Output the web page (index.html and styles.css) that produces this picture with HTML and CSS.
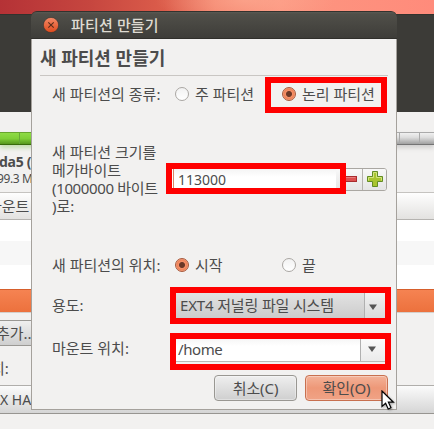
FILE: index.html
```html
<!DOCTYPE html>
<html lang="ko">
<head>
<meta charset="utf-8">
<title>파티션 만들기</title>
<link rel="stylesheet" href="styles.css">
</head>
<body>
<div class="desktop">
  <div class="wallpaper"></div>
  <div class="installer-head"></div>
  <div class="installer">
    <div class="disk-bar"><div class="disk-used"></div><div class="disk-free"></div></div>
    <div class="disk-name"><b>da5 (</b></div>
    <div class="disk-size">99.3 M</div>
    <div class="table-head"><span>마운트</span></div>
    <div class="table-row first"></div>
    <div class="table-row alt"></div>
    <div class="table-row"></div>
    <div class="table-row selected"></div>
    <div class="add-button"><span>추가..</span></div>
    <div class="device-label"><span>치:</span></div>
    <div class="device-combo">X HA</div>
  </div>
</div>

<div class="dialog">
  <div class="titlebar">
    <svg class="close" viewBox="0 0 16 16" width="16" height="16">
      <defs><linearGradient id="closeFill" x1="0" y1="0" x2="0" y2="1"><stop offset="0" stop-color="#f58a68"/><stop offset="1" stop-color="#df4a1c"/></linearGradient></defs>
      <circle cx="8" cy="8" r="7.6" fill="url(#closeFill)" stroke="#353430" stroke-width=".6"/>
      <path d="M5.3 5.3l5.4 5.4M10.7 5.3l-5.4 5.4" stroke="#5a2c1b" stroke-width="1.1"/>
    </svg>
    <span class="title">파티션 만들기</span>
  </div>
  <div class="content">
    <h1><span>새 파티션 만들기</span></h1>
    <div class="row row-type">
      <label>새 파티션의 종류:</label>
      <div class="radios">
        <span class="option"><i class="radio"></i><span>주 파티션</span></span>
        <span class="option"><i class="radio on"></i><span>논리 파티션</span></span>
      </div>
      <div class="mark mark-type"></div>
    </div>
    <div class="row row-size">
      <label>새 파티션 크기를<br>메가바이트<br><span class="tight">(1000000 바이트</span><br>)로:</label>
      <div class="spin">
        <div class="spin-value">113000</div>
        <div class="spin-button minus">
          <svg width="16" height="6" viewBox="0 0 16 6"><rect x=".5" y=".5" width="15" height="5" fill="#dc4f4f" stroke="#a82b2e"/><path d="M1.5 1.5h13" stroke="#e87d7b"/></svg>
        </div>
        <div class="spin-button plus">
          <svg width="16" height="16" viewBox="0 0 16 16"><path d="M5.5 .5h5v5h5v5h-5v5h-5v-5h-5v-5h5z" fill="#a9c52f" stroke="#638c25"/><path d="M1.5 9.5v-3h5v-5h3v5h5v3" fill="none" stroke="#d3e57e"/></svg>
        </div>
      </div>
      <div class="mark mark-size"></div>
    </div>
    <div class="row row-place">
      <label>새 파티션의 위치:</label>
      <div class="radios">
        <span class="option"><i class="radio on"></i><span>시작</span></span>
        <span class="option"><i class="radio"></i><span>끝</span></span>
      </div>
    </div>
    <div class="row row-use">
      <label>용도:</label>
      <div class="combo">
        <span class="combo-value">EXT4 저널링 파일 시스템</span>
        <span class="combo-arrow"><svg width="8" height="6" viewBox="0 0 8 6"><path d="M0 .5h8L4 6z" fill="#555"/></svg></span>
      </div>
      <div class="mark mark-use"></div>
    </div>
    <div class="row row-mount">
      <label>마운트 위치:</label>
      <div class="entry">
        <span class="entry-value">/home</span>
        <span class="entry-arrow"><svg width="8" height="6" viewBox="0 0 8 6"><path d="M0 .5h8L4 6z" fill="#555"/></svg></span>
      </div>
      <div class="mark mark-mount"></div>
    </div>
    <div class="actions">
      <button type="button">취소(C)</button>
      <button type="button" class="default">확인(O)</button>
    </div>
  </div>
</div>
<svg class="cursor" width="15" height="21" viewBox="0 0 15 21">
  <path d="M1 1v15.5l3.6-3.3 2.6 5.8 2.8-1.3-2.6-5.5h5z" fill="#fff" stroke="#000" stroke-width="1.2"/>
</svg>
</body>
</html>
```
FILE: styles.css
```css
* { box-sizing: border-box; }
body {
  margin: 0;
  width: 434px;
  height: 429px;
  position: relative;
  overflow: hidden;
  background: #f2f1f0;
  color: #4c4c4c;
  font: 15px/18px "Noto Sans", "Noto Sans CJK KR", sans-serif;
  white-space: nowrap;
}
.desktop { display: flex; flex-direction: column; height: 429px; }
.wallpaper {
  height: 14px;
  background: radial-gradient(ellipse 90px 24px at 245px 0, rgba(255,180,155,.5), transparent),
    linear-gradient(90deg, #b53236 0, #c6463f 90px, #dc5d4b 165px, #f3846d 215px, #fc9680 280px, #ff8b7b 434px);
}
.installer-head { height: 98px; background: #3c3b37; border-top: 1px solid #33322e; }
.installer { flex: 1; display: flex; flex-direction: column; padding-top: 20px; }
.disk-bar { display: flex; height: 20px; flex: none; }
.disk-used, .disk-free { height: 13px; }
.disk-used {
  width: 200px;
  border-top: 1px solid #67a52d;
  border-bottom: 1px solid #386b0b;
  background: linear-gradient(90deg, transparent 19px, #67a837 19px, #67a837 20px, transparent 20px), linear-gradient(#8edb45 0, #7fcf37 50%, #56971e);
  box-shadow: 0 3px 4px rgba(125,190,80,.4);
}
.disk-free {
  flex: 1;
  border-top: 1px solid #aaa;
  border-bottom: 1px solid #747474;
  background: linear-gradient(90deg, transparent 199px, #aaa 199px, #aaa 200px, transparent 200px, transparent 219px, #aaa 219px, #aaa 220px, transparent 220px), linear-gradient(#f0f0f0 0, #ddd 40%, #a0a0a0);
  box-shadow: 0 3px 4px rgba(130,130,130,.3);
}
.disk-name { height: 19px; line-height: 19px; font-size: 14px; margin-left: -1px; letter-spacing: -.3px; }
.disk-size { height: 21px; line-height: 15px; font-size: 12px; margin-left: -3px; letter-spacing: -.4px; }
.table-head {
  height: 28px;
  line-height: 26px;
  border-top: 1px solid #c5c3c0;
  border-bottom: 1px solid #b5b3b0;
  background: linear-gradient(#fefefe, #e3e2e0);
}
.table-head span { margin-left: -12px; }
.table-row { height: 24px; background: #fff; }
.table-row.first { height: 21px; }
.table-row.alt { background: #f7f7f7; }
.table-row.selected { background: linear-gradient(#f58352, #ec713d); border-top: 1px solid #d65f2c; border-bottom: 1px solid #d4cfcb; }
.add-button {
  width: 80px;
  height: 26px;
  margin-top: 7px;
  line-height: 24px;
  border: 1px solid #9a9894;
  border-left: 0;
  background: linear-gradient(#efefef, #cfcfcf);
}
.add-button span { margin-left: -4px; }
.device-label { height: 39px; line-height: 44px; }
.device-label span { margin-left: -9px; }
.device-combo {
  height: 29px;
  line-height: 27px;
  font-size: 14px;
  border-top: 1px solid #b0aeab;
  border-bottom: 1px solid #979591;
  background: linear-gradient(#fbfbfb, #d5d5d5);
}
.table-row, .table-head, .disk-name, .disk-size, .add-button, .device-label, .device-combo { flex: none; }

.dialog {
  position: absolute;
  left: 31px;
  top: 11px;
  width: 366px;
  height: 399px;
  display: flex;
  flex-direction: column;
}
.titlebar {
  height: 28px;
  display: flex;
  align-items: center;
  padding-left: 12px;
  border-radius: 6px 6px 0 0;
  border-top: 1px solid #33322e;
  border-bottom: 1px solid #302f2b;
  background: linear-gradient(#5a5953 0, #504f49 2px, #3e3d39 100%);
  color: #dfdbd2;
}
.title { margin-left: 12px; font-weight: 500; letter-spacing: .15px; }
.content {
  flex: 1;
  padding: 0 8px;
  background: #f2f1f0;
  border: 1px solid #a5a19c;
  border-top: 0;
}
h1 { margin: 0; height: 37px; line-height: 38px; font-size: 18px; font-weight: 700; border-bottom: 1px solid #c9c6c3; }
.row { position: relative; display: flex; align-items: center; padding-left: 12px; }
.row label { width: 123px; flex: none; }
.tight { letter-spacing: -.35px; }
.row-type { height: 36px; }
.row-size { height: 134px; }
.row-size label { margin-top: -1px; }
.row-place { height: 38px; }
.row-use { height: 44px; }
.row-use label { margin-top: -2px; }
.row-mount { height: 43px; }
.row-mount label { margin-top: -3px; }
.radios { display: grid; grid-template-columns: 107px 100px; }
.option { display: flex; align-items: center; gap: 6px; }
.radio {
  width: 14px;
  height: 14px;
  border: 1px solid #aaa7a3;
  border-radius: 50%;
  background: linear-gradient(#f2f2f2, #fff);
}
.radio.on { border-color: #a7583a; background: radial-gradient(circle, #6b3726 0 2.5px, #f49069 3.5px, #f08256 5px, #f5a587 6px); }
.mark { position: absolute; border: 6px solid #f00; }
.mark-type { left: 225px; top: 1px; width: 122px; height: 36px; }
.mark-size { left: 126px; top: 51px; width: 180px; height: 31px; }
.mark-use { left: 130px; top: 3px; width: 221px; height: 37px; }
.mark-mount { left: 130px; top: 5px; width: 221px; height: 37px; }
.spin {
  display: flex;
  width: 219px;
  height: 23px;
  margin-left: -7px;
  border: 1px solid #aaa7a2;
  border-radius: 3px;
  background: #fff;
}
.spin-value {
  flex: 1;
  margin-left: 4px;
  padding-left: 4px;
  line-height: 22px;
  border-left: 1px solid #d98567;
  font-size: 14px;
  background: linear-gradient(#f4f4f4, #fff 8px);
}
.spin-button { display: flex; align-items: center; justify-content: center; background: linear-gradient(#f8f8f8, #e5e5e5); }
.minus { width: 26px; padding-right: 1px; }
.minus svg { flex: none; }
.plus { width: 24px; border-left: 1px solid #b5b2ae; border-radius: 0 2px 2px 0; }
.combo, .entry { display: flex; width: 213px; height: 27px; }
.combo { background: linear-gradient(#e2e2e2, #cacaca); }
.combo-value { width: 189px; padding-left: 5px; line-height: 24px; letter-spacing: -.15px; }
.combo-arrow { flex: 1; display: flex; align-items: center; padding: 1px 0 0 4px; border-left: 1px solid #b0b0b0; background: linear-gradient(#f1f1f1, #d8d8d8); }
.entry { background: linear-gradient(#f4f4f4, #fff 8px); border-bottom: 1px solid #bcb9b6; height: 24px; }
.entry-value { width: 185px; padding-left: 3px; line-height: 22px; letter-spacing: -.4px; }
.entry-arrow { flex: 1; display: flex; align-items: center; padding-left: 7px; border-left: 1px solid #b0b0b0; background: linear-gradient(#fafafa, #ebebeb); }
.actions { display: flex; justify-content: flex-end; gap: 8px; padding-top: 4px; }
button {
  width: 83px;
  height: 26px;
  padding: 0 0 1px;
  border: 1px solid #999792;
  border-radius: 4px;
  background: linear-gradient(#efefef, #cfcfcf);
  box-shadow: inset 0 0 0 1px rgba(255,255,255,.35);
  color: #4c4c4c;
  font: inherit;
  letter-spacing: -.1px;
}
button.default { border-color: #c8704f; background: linear-gradient(#f3b298, #ee9878 50%, #f0a386); }
.cursor { position: absolute; left: 381px; top: 390px; filter: drop-shadow(1px 1px 1px rgba(0,0,0,.3)); }
```
